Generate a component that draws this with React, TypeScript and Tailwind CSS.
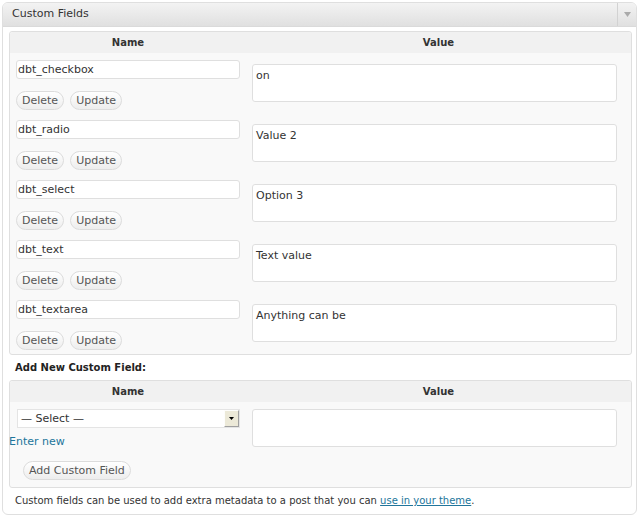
import React from "react";

const rows: [string, string][] = [
  ["dbt_checkbox", "on"],
  ["dbt_radio", "Value 2"],
  ["dbt_select", "Option 3"],
  ["dbt_text", "Text value"],
  ["dbt_textarea", "Anything can be"],
];

function Pill({ children }: { children: React.ReactNode }) {
  return (
    <button className="h-[19px] px-[5px] rounded-full border border-[#dcdcdc] bg-linear-to-b from-white to-[#ededed] text-[11px] leading-none text-[#555]">
      {children}
    </button>
  );
}

function TableHead() {
  return (
    <div className="flex h-[21px] bg-[#f1f1f1] items-center text-[10px] font-bold text-[#333] rounded-t-[3px]">
      <div className="w-[236px] text-center">Name</div>
      <div className="flex-1 text-center">Value</div>
    </div>
  );
}

export default function App() {
  return (
    <div className="w-[640px] h-[517px] bg-white pt-[2px] pl-[2px] font-['DejaVu_Sans',Verdana,sans-serif] text-[#333]">
      <div className="w-[635px] h-[513px] border border-[#dfdfdf] rounded-[6px] overflow-hidden flex flex-col bg-white">
        <div className="h-[24px] shrink-0 flex bg-linear-to-b from-[#f3f3f3] to-[#e0e0e0] border-b border-[#dadada]">
          <div className="pl-[9px] flex items-center text-[11px] text-[#333]">Custom Fields</div>
          <div className="ml-auto w-[19px] border-l border-[#d2d2d2] flex items-center justify-center">
            <svg width="7" height="5" viewBox="0 0 7 5">
              <path d="M0 0 H7 L3.5 5 Z" fill="#aaaaaa" />
            </svg>
          </div>
        </div>
        <div className="pl-[6px] pr-[4px] pt-[4px] flex flex-col">
          <div className="border border-[#dfdfdf] rounded-[3px] bg-[#f9f9f9]">
            <TableHead />
            <div className="pt-[7px] pb-[5px] flex flex-col gap-[11px]">
              {rows.map(([name, value]) => (
                <div key={name} className="flex h-[49px]">
                  <div className="w-[236px] pl-[6px]">
                    <input
                      readOnly
                      value={name}
                      className="block w-[224px] h-[19px] border border-[#dfdfdf] rounded-[3px] bg-white px-[1px] text-[11px] text-[#333] outline-none"
                    />
                    <div className="mt-[12px] flex gap-[6px]">
                      <Pill>Delete</Pill>
                      <Pill>Update</Pill>
                    </div>
                  </div>
                  <div className="pl-[6px] pt-[4px]">
                    <textarea
                      readOnly
                      value={value}
                      className="block w-[365px] h-[38px] border border-[#dfdfdf] rounded-[3px] bg-white px-[3px] pt-[4px] text-[11px] leading-[13px] text-[#333] resize-none outline-none"
                    />
                  </div>
                </div>
              ))}
            </div>
          </div>

          <div className="h-[25px] flex items-center pl-[6px] text-[10px] font-bold text-[#222]">
            Add New Custom Field:
          </div>

          <div className="border border-[#dfdfdf] rounded-[3px] bg-[#f9f9f9]">
            <TableHead />
            <div className="pt-[7px] pb-[7px] flex">
              <div className="w-[236px]">
                <div className="ml-[7px] w-[223px] h-[19px] border border-[#e4e4e4] bg-white flex items-center">
                  <span className="pl-[3px] text-[11px] text-[#333] leading-none">— Select —</span>
                  <div className="ml-auto w-[15px] h-[17px] bg-[#ece9d8] border-t border-l border-[#fdfdfb] border-r border-b border-r-[#a0a0a0] border-b-[#a0a0a0] flex items-center justify-center">
                    <svg width="5" height="3" viewBox="0 0 5 3">
                      <path d="M0 0 H5 L2.5 3 Z" fill="#000" />
                    </svg>
                  </div>
                </div>
                <div className="mt-[7px] -ml-px h-[13px] text-[11px] leading-[13px] text-[#21759b]">Enter new</div>
                <div className="mt-[13px] pl-[13px] flex">
                  <Pill>Add Custom Field</Pill>
                </div>
              </div>
              <div className="pl-[6px]">
                <textarea
                  readOnly
                  value=""
                  className="block w-[365px] h-[38px] border border-[#dfdfdf] rounded-[3px] bg-white px-[3px] pt-[3px] text-[11px] text-[#333] resize-none outline-none"
                />
              </div>
            </div>
          </div>

          <div className="h-[25px] flex items-center pl-[6px] text-[10px] text-[#333]">
            <span>
              Custom fields can be used to add extra metadata to a post that you can{" "}
              <span className="text-[#21759b] underline">use in your theme</span>.
            </span>
          </div>
        </div>
      </div>
    </div>
  );
}
